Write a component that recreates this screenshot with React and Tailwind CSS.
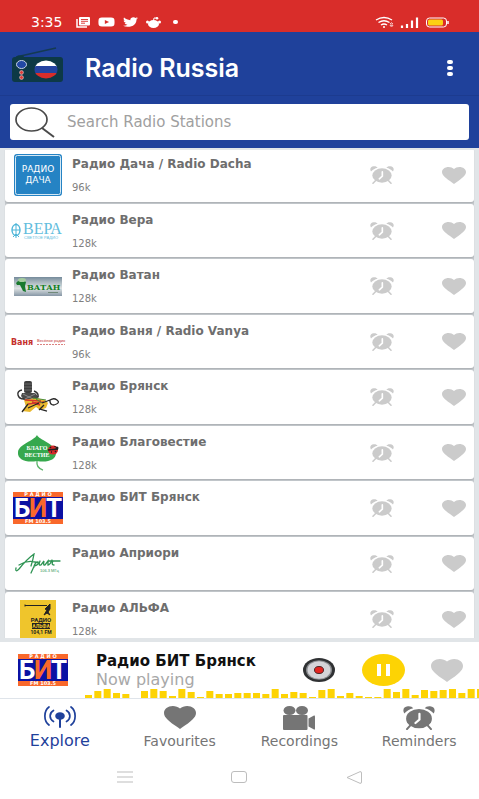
import { useState } from 'react'
import { FaTwitter, FaYoutube } from 'react-icons/fa'

const bars = [
  3, 7, 9, 5, 4, 0, 7, 9, 7, 2, 9, 6, 1, 7, 4, 4, 5, 5, 5, 4, 9, 4, 6, 5, 1, 8, 9, 2, 5, 2, 1, 1,
  9, 6, 9, 3, 8, 7, 8, 9, 5, 9, 9,
]

function HeartIcon({ className }) {
  return (
    <svg className={className} viewBox="2 3 20 18.35" preserveAspectRatio="none" fill="currentColor" aria-hidden="true">
      <path d="M12 21.35l-1.45-1.32C5.4 15.36 2 12.28 2 8.5 2 5.42 4.42 3 7.5 3c1.74 0 3.41.81 4.5 2.09C13.09 3.81 14.76 3 16.5 3 19.58 3 22 5.42 22 8.5c0 3.78-3.4 6.86-8.55 11.54L12 21.35z" />
    </svg>
  )
}

function AlarmIcon({ className }) {
  return (
    <svg className={className} viewBox="0 0 72 55" preserveAspectRatio="none" fill="currentColor" aria-hidden="true">
      <ellipse cx="36" cy="29" rx="29" ry="22" />
      <path d="M3 17C-2 9 2 1 11 0.500C17 0 21 2 23 5C15 7 8 11 3 17Z" />
      <path d="M69 17C74 9 70 1 61 0.500C55 0 51 2 49 5C57 7 64 11 69 17Z" />
      <path d="M17 44L9 53M55 44L63 53" stroke="currentColor" strokeWidth="4.500" strokeLinecap="round" />
      <path d="M37 18V31L28 39" fill="none" stroke="#fff" strokeWidth="5" strokeLinecap="round" />
    </svg>
  )
}

function ExploreIcon() {
  return (
    <svg className="h-[22px] w-8" viewBox="0 0 32 22" fill="none" stroke="currentColor" strokeWidth="1.700" strokeLinecap="round" aria-hidden="true">
      <ellipse cx="16" cy="10" rx="4.800" ry="3.800" fill="currentColor" stroke="none" />
      <path d="M16 11V21" strokeWidth="2" />
      <path d="M9.500 4.500C5 7 5 13 9.500 15.500M22.500 4.500C27 7 27 13 22.500 15.500" />
      <path d="M5 1C-0.500 5 -0.500 15 5 19M27 1C32.500 5 32.500 15 27 19" />
    </svg>
  )
}

function CameraIcon() {
  return (
    <svg className="h-6 w-8" viewBox="0 0 32 24" fill="currentColor" aria-hidden="true">
      <ellipse cx="6.500" cy="4.500" rx="6" ry="4.500" />
      <ellipse cx="19" cy="4.500" rx="6" ry="4.500" />
      <rect y="9" width="24.500" height="15" rx="1" />
      <path d="M25.500 12.500L31 9.500Q32 9 32 10.500V22.500Q32 24 31 23.500L25.500 20.500Z" />
    </svg>
  )
}

function RadioLogo() {
  return (
    <svg className="h-9 w-[54px] shrink-0" viewBox="0 0 54 36" aria-hidden="true">
      <path d="M5 10L45 1" stroke="#143a52" strokeWidth="1.500" />
      <path d="M4 11L7 8.500H12L14 11Z" fill="#0d3946" />
      <rect x="1" y="10" width="51" height="25" rx="3" fill="#0d3946" />
      <ellipse cx="10.500" cy="17.500" rx="5" ry="4" fill="#2148a5" stroke="#c9d4e6" />
      <circle cx="10.500" cy="25.500" r="1.900" fill="#e03a35" stroke="#d9c3c8" strokeWidth="0.700" />
      <circle cx="10.500" cy="30.500" r="1.900" fill="#e03a35" stroke="#d9c3c8" strokeWidth="0.700" />
      <clipPath id="flag">
        <ellipse cx="35" cy="22.500" rx="11.500" ry="9" />
      </clipPath>
      <g clipPath="url(#flag)">
        <rect x="23" y="13" width="24" height="7" fill="#fff" />
        <rect x="23" y="19" width="24" height="7" fill="#2443a0" />
        <rect x="23" y="26" width="24" height="7" fill="#d92d2a" />
      </g>
    </svg>
  )
}

function DachaLogo() {
  return (
    <svg width="48" height="42" viewBox="0 0 48 42" aria-hidden="true">
      <rect width="48" height="42" rx="3" fill="#2583c4" />
      <rect x="1.500" y="1.500" width="45" height="39" rx="2" fill="none" stroke="#d4e8f5" />
      <g fill="#fff" fontFamily="DejaVu Sans" fontSize="9" textAnchor="middle">
        <text x="24" y="18">РАДИО</text>
        <text x="24" y="29">ДАЧА</text>
      </g>
    </svg>
  )
}

function VeraLogo() {
  return (
    <svg width="54" height="20" viewBox="0 0 54 20" aria-hidden="true">
      <g fill="none" stroke="#4db5d8">
        <ellipse cx="5" cy="9" rx="4" ry="5.500" strokeWidth="1.400" />
        <path d="M5 2V17M1 9H9M2 16L5 13L8 16" />
      </g>
      <text x="12" y="13" fill="#62bddd" fontFamily="Liberation Serif" fontSize="16">ВЕРА</text>
      <text x="13" y="18" fill="#62bddd" fontFamily="Liberation Sans" fontSize="4">СВЕТЛОЕ РАДИО</text>
    </svg>
  )
}

function VatanLogo() {
  return (
    <svg width="48" height="19" viewBox="0 0 48 19" aria-hidden="true">
      <linearGradient id="vatan" x2="0" y2="1">
        <stop offset="0" stopColor="#758b9b" />
        <stop offset="0.250" stopColor="#a6b4bc" />
        <stop offset="0.600" stopColor="#dde2e2" />
        <stop offset="1" stopColor="#8797a6" />
      </linearGradient>
      <rect width="48" height="19" fill="url(#vatan)" />
      <path d="M2 6Q5 2 9 3L12 5L11 9L12 15L9 14L7 10L6 8L3 8Z" fill="#197a2d" />
      <ellipse cx="8" cy="3" rx="4" ry="2" fill="#a4cc9e" />
      <text x="13" y="13" fill="#128022" fontFamily="DejaVu Serif" fontSize="8" fontWeight="bold">ВАТАН</text>
      <path d="M34 15.500H44" stroke="#718a7a" />
    </svg>
  )
}

function VanyaLogo() {
  return (
    <svg width="56" height="12" viewBox="0 0 56 12" fill="#c5302c" aria-hidden="true">
      <text x="1" y="9" fontFamily="DejaVu Sans" fontSize="8" fontWeight="bold">Ваня</text>
      <text x="27" y="6" fontFamily="Liberation Sans" fontSize="4">Весёлое радио</text>
      <path d="M27 8.500H55" stroke="#c5302c" strokeDasharray="2 1" opacity="0.600" />
    </svg>
  )
}

function BryanskLogo() {
  return (
    <svg width="44" height="33" viewBox="0 0 44 33" fill="none" aria-hidden="true">
      <rect x="8" y="0" width="8" height="12" rx="2" fill="#3d3d3d" />
      <path d="M8 3H16M8 6H16M8 9H16" stroke="#777" strokeWidth="0.800" />
      <path d="M6 12H19L23 16L18 20L8 19L5 15Z" fill="#4a4a4a" />
      <path d="M6 9Q1 10 2 14T8 18M18 10Q23 12 22 16" stroke="#333" strokeWidth="1.400" />
      <path d="M7 13L17 18M19 13L9 18" stroke="#999" strokeWidth="0.800" />
      <path d="M8 19L20 17L29 19L32 22L30 27L24 29L20 26L14 31L6 30L10 26Z" fill="#eab92f" />
      <path d="M9 19L25 20M12 23L28 21M16 21L24 24" stroke="#d2372c" strokeWidth="1.600" />
      <path d="M17 17L30 19M20 18L26 22" stroke="#4c8d3b" />
      <path d="M6 31L12 23M12 27L23 22M23 29L28 24" stroke="#262626" strokeWidth="1.300" />
      <path d="M26 22L34 19M33 20Q37 16 41 19T38 24Q34 24 34 20M24 28L31 30" stroke="#262626" strokeWidth="1.300" />
    </svg>
  )
}

function LeafLogo() {
  return (
    <svg width="42" height="36" viewBox="0 0 42 36" aria-hidden="true">
      <path d="M20 0C22 5 38 8 39 18C39 25 30 28 20 26C10 28 0 25 1 17C2 9 17 6 20 0Z" fill="#36a84d" />
      <path d="M20 26Q19 33 26 35" fill="none" stroke="#5cb56a" strokeWidth="1.300" />
      <g fill="#fff" fontFamily="Liberation Serif" fontWeight="bold" textAnchor="middle">
        <text x="20" y="15" fontSize="6">БЛАГО</text>
        <text x="20" y="22" fontSize="6">ВЕСТИЕ</text>
      </g>
      <ellipse cx="36" cy="15" rx="5" ry="4.500" fill="#d42828" />
      <path d="M31 15L41 14M33 12L34 13M38 11L38 12M34 17L35 17M38 17L39 16" stroke="#222" strokeWidth="1.500" />
      <circle cx="40" cy="13" r="1.500" fill="#222" />
    </svg>
  )
}

function BitLogo() {
  return (
    <svg width="50" height="32" viewBox="0 0 50 32" aria-hidden="true">
      <rect width="50" height="32" fill="#f9682b" />
      <rect y="5" width="50" height="22" fill="#0b11a3" />
      <text y="25" fill="#fff" fontFamily="Roboto" fontSize="26" fontWeight="bold">
        <tspan x="1">Б</tspan>
        <tspan x="16" fill="#f9682b">И</tspan>
        <tspan x="33">Т</tspan>
      </text>
      <g fill="#fff" fontFamily="DejaVu Sans" fontSize="5" fontWeight="bold" textAnchor="middle">
        <text x="25" y="4">Р А Д И О</text>
        <text x="25" y="31">FM 103.5</text>
      </g>
    </svg>
  )
}

function AprioriLogo() {
  return (
    <svg width="46" height="22" viewBox="0 0 46 22" fill="none" aria-hidden="true">
      <path
        d="M1 15Q0 20 4 16Q12 6 19 1Q18 7 16 13M4 12Q12 7 20 9M19 14Q20 9 23 9Q24 12 19 13M16 20L21 9M25 8Q23 13 26 12L29 8Q28 13 30 12L33 8V12Q35 12 37 7M33 8L45 8M38 8Q36 12 39 12"
        stroke="#2f9454"
        strokeWidth="1.300"
        strokeLinecap="round"
      />
      <text x="25" y="19" fill="#2f9454" fontFamily="Liberation Sans" fontSize="4">106.3 МГц</text>
    </svg>
  )
}

function AlfaLogo() {
  return (
    <svg width="36" height="38" viewBox="0 0 36 38" aria-hidden="true">
      <rect width="36" height="38" fill="#efc52c" />
      <path d="M5 5.500H27M5 4.500V6.500M25 9L30 4V9L28 12L30 15L27 13L24 15L27 10Z" fill="#222" stroke="#222" />
      <g fill="#222" fontFamily="Roboto" fontWeight="bold" textAnchor="middle">
        <text x="21" y="22" fontSize="6">РАДИО</text>
        <rect x="12" y="23" width="18" height="6" />
        <text x="21" y="28" fontSize="5" fill="#efc52c">АЛЬФА</text>
        <text x="21" y="34" fontSize="5">104,1 FM</text>
      </g>
    </svg>
  )
}

const stations = [
  { name: 'Радио Дача / Radio Dacha', rate: '96k', Logo: DachaLogo },
  { name: 'Радио Вера', rate: '128k', Logo: VeraLogo },
  { name: 'Радио Ватан', rate: '128k', Logo: VatanLogo },
  { name: 'Радио Ваня / Radio Vanya', rate: '96k', Logo: VanyaLogo },
  { name: 'Радио Брянск', rate: '128k', Logo: BryanskLogo },
  { name: 'Радио Благовестие', rate: '128k', Logo: LeafLogo },
  { name: 'Радио БИТ Брянск', rate: '', Logo: BitLogo },
  { name: 'Радио Априори', rate: '', Logo: AprioriLogo },
  { name: 'Радио АЛЬФА', rate: '128k', Logo: AlfaLogo },
]

const tabs = [
  { name: 'Explore', icon: <ExploreIcon /> },
  { name: 'Favourites', icon: <HeartIcon className="h-[23px] w-8" /> },
  { name: 'Recordings', icon: <CameraIcon /> },
  { name: 'Reminders', icon: <AlarmIcon className="h-6 w-8" /> },
]

function StatusBar() {
  return (
    <div className="flex h-8 shrink-0 items-end justify-between bg-[#d92d2a] pr-[30px] pb-[3px] pl-[31px] text-white">
      <div className="flex items-center">
        <span className="w-[45px] font-['DejaVu_Sans',sans-serif] text-[14px] leading-[14px]">3:35</span>
        <svg className="h-[11px] w-[14px]" viewBox="0 0 14 11" fill="none" stroke="currentColor" aria-hidden="true">
          <path d="M1 2V10H11" strokeWidth="1.500" />
          <rect x="3" y="0" width="11" height="8.500" rx="1" fill="currentColor" stroke="none" />
          <path d="M5 2.500H12M5 4.300H12M5 6.200H9" stroke="#d92d2a" strokeWidth="0.900" />
        </svg>
        <FaYoutube className="ml-2 h-[12px] w-[17px]" preserveAspectRatio="none" />
        <FaTwitter className="ml-2 h-[12px] w-[15px]" preserveAspectRatio="none" />
        <svg className="ml-2 h-[11px] w-[15px]" viewBox="0 0 15 11" fill="currentColor" aria-hidden="true">
          <ellipse cx="7.500" cy="7" rx="5.500" ry="4" />
          <circle cx="1.500" cy="5" r="1.500" />
          <circle cx="13.500" cy="5" r="1.500" />
          <circle cx="11" cy="1.300" r="1.300" />
          <path d="M7.500 4L8 1H11" fill="none" stroke="currentColor" />
        </svg>
        <span className="ml-3 h-1 w-[5px] rounded-full bg-white"></span>
      </div>
      <svg className="mb-px h-[12px] w-[74px]" viewBox="0 0 74 12" fill="none" stroke="#fff" aria-hidden="true">
        <path d="M1 4Q9 -1 17 4M3.500 6.500Q9 3 14.500 6.500M6 9Q9 7 12 9" strokeWidth="1.400" />
        <circle cx="9" cy="11" r="1" fill="#fff" stroke="none" />
        <path d="M15 8L16.500 6.500L18 8ZM15 9.500L16.500 11L18 9.500Z" strokeWidth="0.600" />
        <path d="M27 12V9.500M32 12V8M37 12V4.500M42 12V1.500" strokeWidth="2.200" />
        <rect x="51.500" y="2" width="20" height="9" rx="3" />
        <rect x="53" y="3.500" width="15" height="6" rx="1.500" fill="#fcd013" stroke="none" />
        <path d="M73 5V8" strokeWidth="1.500" />
      </svg>
    </div>
  )
}

function App() {
  const [search, setSearch] = useState('')
  const [tab, setTab] = useState('Explore')

  return (
    <div className="flex h-screen flex-col bg-white font-['DejaVu_Sans',sans-serif]">
      <StatusBar />

      <header className="shrink-0 bg-[#1f419b]">
        <div className="flex h-16 items-center border-b border-[#1c3b8f] pt-[9px] pr-[26px] pl-[11px]">
          <div className="mb-[6px]">
            <RadioLogo />
          </div>
          <h1 className="ml-5 font-['Inter',sans-serif] text-[25px] leading-7 font-semibold text-white">Radio Russia</h1>
          <button type="button" aria-label="Menu" className="ml-auto flex flex-col gap-[2px]">
            <span className="h-1 w-[6px] rounded-full bg-white"></span>
            <span className="h-1 w-[6px] rounded-full bg-white"></span>
            <span className="h-1 w-[6px] rounded-full bg-white"></span>
          </button>
        </div>
        <div className="px-[10px] py-2">
          <label className="flex h-9 items-center rounded-[3px] bg-white pl-[5px]">
            <svg className="h-[31px] w-10 shrink-0" viewBox="0 0 40 31" fill="none" stroke="#4a4a4a" aria-label="Search">
              <ellipse cx="16.500" cy="12.500" rx="15.500" ry="11.500" strokeWidth="1.700" />
              <path d="M27 21L39 30" strokeWidth="2" />
            </svg>
            <input
              type="search"
              value={search}
              onChange={(e) => setSearch(e.target.value)}
              placeholder="Search Radio Stations"
              className="ml-3 w-full min-w-0 text-[15px] leading-5 text-gray-700 outline-none placeholder:text-[#a0a0a0]"
            />
          </label>
        </div>
      </header>

      <main className="min-h-0 flex-1 overflow-y-auto border-t-2 border-b-4 border-[#e1e5e8] bg-[#e1e5e8] px-[5px] [scrollbar-width:none]">
        <ul className="-mt-[2px] flex flex-col gap-[2px] bg-[#c3c7cb]">
          {stations.map(({ name, rate, Logo }) => (
            <li key={name} className="flex shrink-0 items-center rounded-[3px] bg-white pr-2 pl-[5px] shadow-[0_1px_1px_#aeb2b6] odd:h-[54px] even:h-[53px]">
              <div className="flex w-14 shrink-0 justify-center">
                <Logo />
              </div>
              <div className="ml-[6px] flex h-full min-w-0 flex-1 flex-col gap-2 pt-2">
                <h2 className="truncate text-[12px] leading-4 font-bold text-[#6e6e6e]">{name}</h2>
                <p className="text-[10px] leading-4 text-[#808080]">{rate}</p>
              </div>
              <button type="button" aria-label="Set reminder" className="text-[#cbcbcb]">
                <AlarmIcon className="h-[18px] w-6" />
              </button>
              <button type="button" aria-label="Add to favourites" className="ml-12 text-[#cbcbcb]">
                <HeartIcon className="h-[17px] w-6" />
              </button>
            </li>
          ))}
        </ul>
      </main>

      <section className="relative flex h-[57px] shrink-0 items-center border-b border-[#dfe4ea] pr-4 pl-[18px]">
        <BitLogo />
        <div className="ml-7 min-w-0 flex-1">
          <h2 className="truncate text-[15px] leading-5 font-bold text-[#111]">Радио БИТ Брянск</h2>
          <p className="text-[16px] leading-[18px] text-[#a8a8a8]">Now playing</p>
        </div>
        <button type="button" aria-label="Record">
          <svg className="h-6 w-8" viewBox="0 0 32 24" aria-hidden="true">
            <ellipse cx="16" cy="12" rx="16" ry="12" fill="#2f3133" />
            <ellipse cx="16" cy="12" rx="13" ry="9.800" fill="#8b8d90" />
            <ellipse cx="16" cy="12" rx="11.500" ry="8.800" fill="#d4d4d8" />
            <ellipse cx="16" cy="12" rx="4.500" ry="3.500" fill="#e32521" stroke="#4c2628" />
          </svg>
        </button>
        <button type="button" aria-label="Pause" className="ml-[27px]">
          <svg className="h-8 w-[43px]" viewBox="0 0 43 32" aria-hidden="true">
            <ellipse cx="21.500" cy="16" rx="21.500" ry="16" fill="#fdd304" />
            <path d="M15 10H19V22H15ZM24 10H28V22H24Z" fill="#fff" />
          </svg>
        </button>
        <button type="button" aria-label="Add to favourites" className="ml-[26px] text-[#cbcbcb]">
          <HeartIcon className="h-[23px] w-8" />
        </button>
        <svg className="absolute right-0 bottom-0 h-[10px] w-[394px]" viewBox="0 0 394 10" fill="#fdd304" aria-hidden="true">
          {bars.map((h, i) => (
            <rect key={i} x={(i * 28) / 3} y={10 - h} width="7" height={h} />
          ))}
        </svg>
      </section>

      <nav className="grid shrink-0 grid-cols-4 pt-[7px]">
        {tabs.map(({ name, icon }) => (
          <button
            key={name}
            type="button"
            onClick={() => setTab(name)}
            className={`flex flex-col items-center ${tab === name ? 'text-[16px] text-[#1f419b]' : 'text-[14px] text-[#757575]'}`}
          >
            <span className="flex h-[25px] items-start">{icon}</span>
            <span className="leading-5">{name}</span>
          </button>
        ))}
      </nav>

      <div className="grid h-12 shrink-0 grid-cols-3 items-center px-[68px] pt-1 text-[#bdbdbd]">
        <button type="button" aria-label="Recent apps" className="flex justify-center">
          <svg className="h-3 w-4" viewBox="0 0 16 12" stroke="currentColor" aria-hidden="true">
            <path d="M0 1H16M0 6H16M0 11H16" />
          </svg>
        </button>
        <button type="button" aria-label="Home" className="flex justify-center">
          <span className="h-3 w-4 rounded-[3px] border border-current"></span>
        </button>
        <button type="button" aria-label="Back" className="flex justify-center">
          <svg className="h-[13px] w-4" viewBox="0 0 16 13" fill="none" stroke="currentColor" aria-hidden="true">
            <path d="M1 6.500L14 0.700Q15.500 0.300 15.500 2V11Q15.500 12.700 14 12.300Z" />
          </svg>
        </button>
      </div>
    </div>
  )
}

export default App
